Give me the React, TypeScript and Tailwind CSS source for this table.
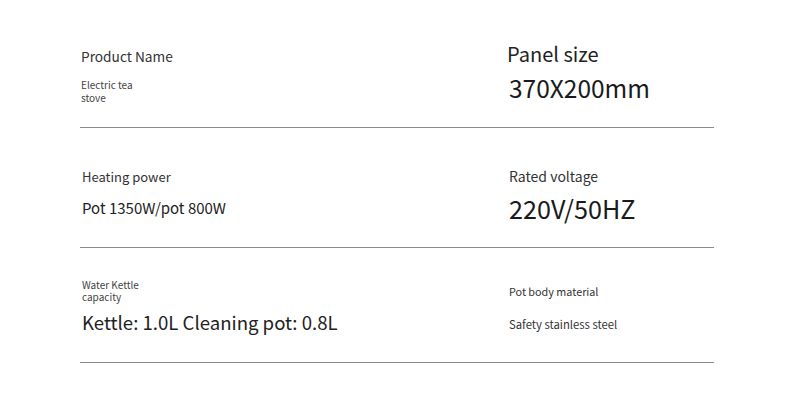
import React from "react";

const font = { fontFamily: '"Noto Sans CJK SC", "Noto Sans", sans-serif' };

export default function App() {
  return (
    <div className="w-[790px] h-[408px] bg-white text-[#222]" style={font}>
      <div className="pl-[80px] w-[714px]">
        {/* Row 1 */}
        <div className="flex h-[128px] border-b border-[#8a8a8a]">
          <div className="w-[427px] pl-[1px] pt-[46px]">
            <div className="text-[13.7px] leading-[20px] text-[#333]">Product Name</div>
            <div className="mt-[12px] text-[10px] leading-[13px] text-[#444]">Electric tea</div>
            <div className="text-[10px] leading-[13px] text-[#444]">stove</div>
          </div>
          <div className="flex-1 pt-[41px]">
            <div className="text-[20px] leading-[26px] text-[#222]">Panel size</div>
            <div className="mt-[5px] pl-[2px] text-[24.5px] leading-[32px] text-[#1a1a1a]">370X200mm</div>
          </div>
        </div>
        {/* Row 2 */}
        <div className="flex h-[120px] border-b border-[#8a8a8a]">
          <div className="w-[427px] pl-[2px] pt-[40px]">
            <div className="text-[13px] leading-[18px] text-[#333]">Heating power</div>
            <div className="mt-[11px] text-[15px] leading-[22px] text-[#222]">Pot 1350W/pot 800W</div>
          </div>
          <div className="flex-1 pl-[2px] pt-[38px]">
            <div className="text-[14px] leading-[20px] text-[#333]">Rated voltage</div>
            <div className="mt-[6px] text-[25.2px] leading-[32px] text-[#1a1a1a]">220V/50HZ</div>
          </div>
        </div>
        {/* Row 3 */}
        <div className="flex h-[115px] border-b border-[#8a8a8a]">
          <div className="w-[427px] pl-[2px] pt-[31px]">
            <div className="text-[10px] leading-[12px] text-[#444]">Water Kettle</div>
            <div className="text-[10px] leading-[12px] text-[#444]">capacity</div>
            <div className="mt-[6px] text-[18.6px] leading-[26px] text-[#222]">Kettle: 1.0L Cleaning pot: 0.8L</div>
          </div>
          <div className="flex-1 pl-[2px] pt-[35px]">
            <div className="text-[10.8px] leading-[16px] text-[#333]">Pot body material</div>
            <div className="mt-[17px] text-[11.3px] leading-[16px] text-[#333]">Safety stainless steel</div>
          </div>
        </div>
      </div>
    </div>
  );
}
